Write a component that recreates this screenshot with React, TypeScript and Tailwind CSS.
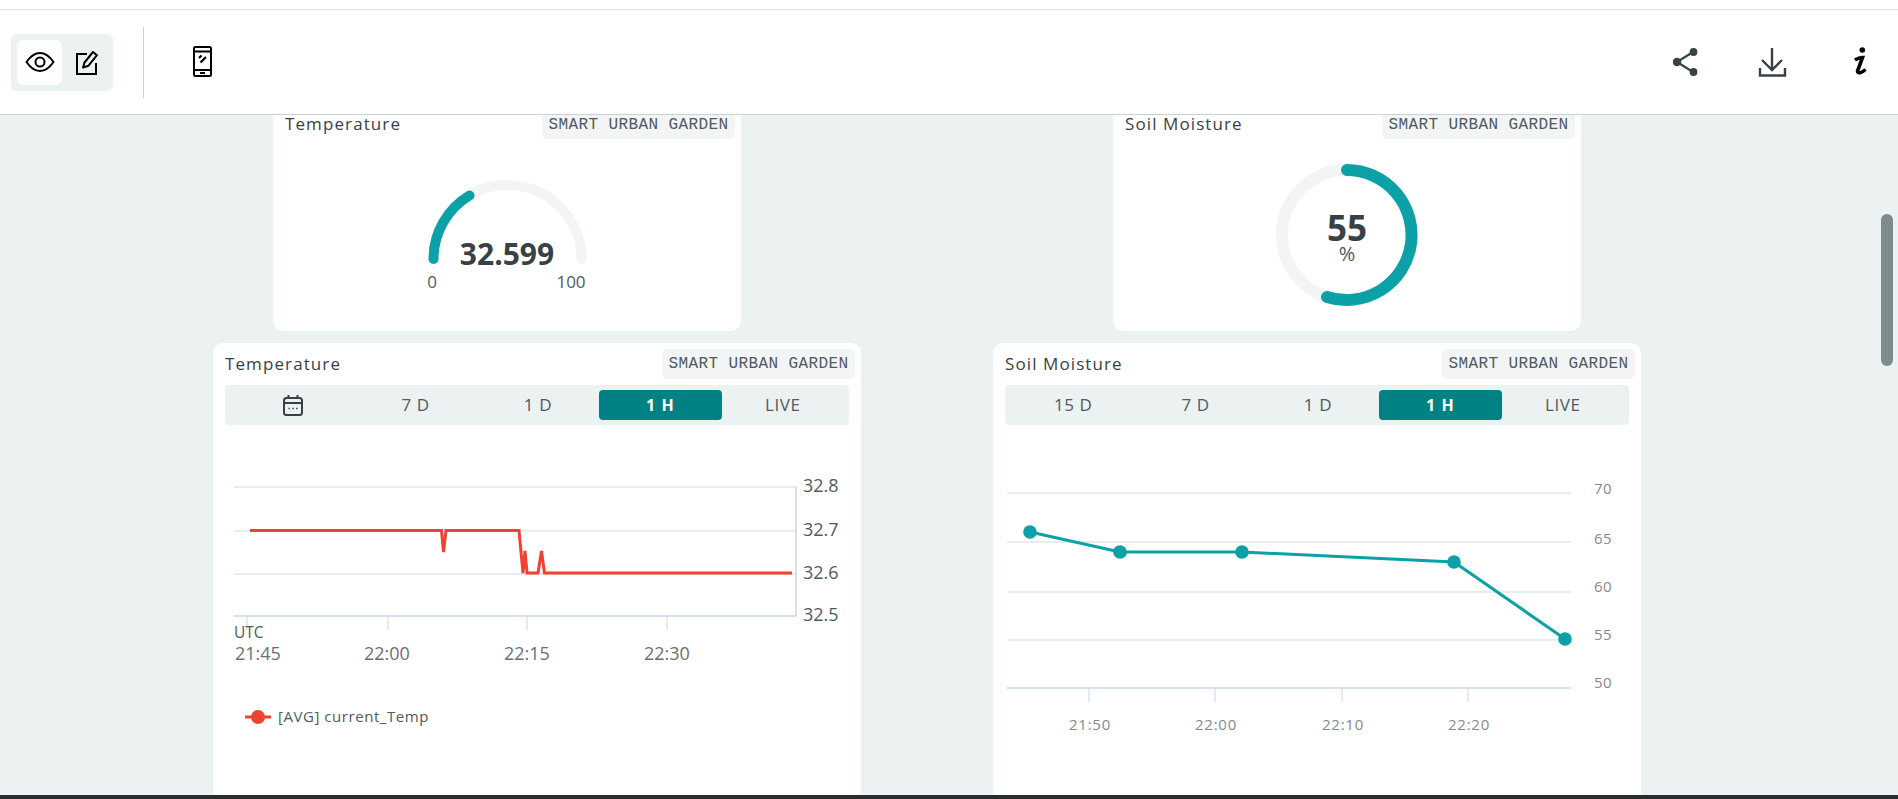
import React from 'react';

const TEAL = '#0ca1a6';

const Chip = ({ clipped }: { clipped?: boolean }) => (
  <span
    className={`flex w-[193px] items-center justify-center bg-[#f3f4f4] font-['Liberation_Mono',monospace] text-[16px] tracking-[0.4px] whitespace-pre text-[#4e5b61] ${
      clipped ? 'h-[24px] rounded-b-md pb-[5px]' : 'h-[30px] rounded-md'
    }`}
  >
    SMART URBAN GARDEN
  </span>
);

const CalendarIcon = () => (
  <svg width="20" height="21" viewBox="0 0 20 21" fill="none" stroke="#374146" strokeWidth="2">
    <rect x="1" y="3" width="18" height="17" rx="2.5" />
    <path d="M1 8h18M5.5 0v4M14.5 0v4" />
    <path d="M5.5 13.5h1.4M9.3 13.5h1.4M13.1 13.5h1.4" strokeWidth="1.6" />
  </svg>
);

const Tabs = ({ first }: { first: React.ReactNode }) => (
  <div className="mx-3 mt-[6px] grid h-[40px] grid-cols-5 items-center rounded bg-[#ecf1f1] pr-[5px] pl-[7px] text-[17px] tracking-[0.6px] text-[#4e5b61]">
    <div className="flex justify-center">{first}</div>
    <div className="text-center">7 D</div>
    <div className="text-center">1 D</div>
    <div className="flex h-[30px] items-center justify-center rounded bg-[#008184] text-[16px] font-bold tracking-[1px] text-white">1 H</div>
    <div className="text-center">LIVE</div>
  </div>
);

const ChartCard = ({ title, first, children }: { title: string; first: React.ReactNode; children: React.ReactNode }) => (
  <section className="flex-1 overflow-hidden rounded-t-[10px] bg-white">
    <div className="flex items-center justify-between pt-[6px] pr-[6px] pl-3">
      <h3 className="text-[17px] font-medium tracking-[1.1px] text-[#374146]">{title}</h3>
      <Chip />
    </div>
    <Tabs first={first} />
    {children}
  </section>
);

const TempChart = () => {
  const ticks = [247, 388, 527, 667];
  const times: [string, number][] = [['21:45', 235], ['22:00', 364], ['22:15', 504], ['22:30', 644]];
  const ys: [string, number][] = [['32.8', 487], ['32.7', 531], ['32.6', 574], ['32.5', 616]];
  return (
    <svg className="block" width="648" height="370" viewBox="213 425 648 370">
      {ys.slice(0, 3).map(([, y]) => (
        <line key={y} x1="234" x2="796" y1={y} y2={y} stroke="#dfe7ea" strokeWidth="1.5" />
      ))}
      <path d="M234 616H796V487" fill="none" stroke="#c9d6ea" strokeWidth="1.5" />
      {ticks.map((x) => (
        <line key={x} x1={x} x2={x} y1="616" y2="630" stroke="#c9d6ea" strokeWidth="1" />
      ))}
      <path
        d="M250 530.5H441.5L443.5 552L446 530.5H519L523 573L525 551L527 573H538L541.5 551L544.5 573H792"
        fill="none"
        stroke="#ee4330"
        strokeWidth="3"
      />
      {ys.map(([v, y]) => (
        <text key={v} x="803" y={y + 5} fontSize="18" fill="#4e5b61">
          {v}
        </text>
      ))}
      <text x="234" y="638" fontSize="15.5" fill="#4e5b61">UTC</text>
      {times.map(([t, x]) => (
        <text key={t} x={x} y="660" fontSize="18" fill="#6d6f71">
          {t}
        </text>
      ))}
      <line x1="245" x2="271" y1="717" y2="717" stroke="#ee4330" strokeWidth="3" />
      <circle cx="258" cy="717" r="7" fill="#ee4330" />
      <text x="278" y="722" fontSize="15" fill="#4e5b61" letterSpacing="0.55">[AVG] current_Temp</text>
    </svg>
  );
};

const SoilChart = () => {
  const grid: [number, number][] = [[493, 494], [542, 544], [592, 592], [640, 640]];
  const labels = ['70', '65', '60', '55'];
  const ticks: [string, number][] = [['21:50', 1089], ['22:00', 1215], ['22:10', 1342], ['22:20', 1468]];
  const pts = [[1030, 532], [1120, 552], [1242, 552], [1454, 562], [1565, 639]];
  return (
    <svg className="block" width="648" height="370" viewBox="993 425 648 370">
      {grid.map(([y, base], i) => (
        <g key={y}>
          <line x1="1007" x2="1571" y1={y} y2={y} stroke="#dfe7ea" strokeWidth="1.5" />
          <text x="1594" y={base} fontSize="15" fill="#7f8c8d" letterSpacing="0.4">{labels[i]}</text>
        </g>
      ))}
      <line x1="1007" x2="1571" y1="688" y2="688" stroke="#c9d6ea" strokeWidth="1.5" />
      <text x="1594" y="688" fontSize="15" fill="#7f8c8d" letterSpacing="0.4">50</text>
      {ticks.map(([t, x]) => (
        <g key={t}>
          <line x1={x} x2={x} y1="688" y2="702" stroke="#c9d6ea" strokeWidth="1" />
          <text x={x + 1} y="730" fontSize="15" fill="#7f8c8d" textAnchor="middle" letterSpacing="0.8">{t}</text>
        </g>
      ))}
      <polyline points={pts.map((p) => p.join(',')).join(' ')} fill="none" stroke={TEAL} strokeWidth="3" />
      {pts.map(([x, y]) => (
        <circle key={x} cx={x} cy={y} r="6.8" fill={TEAL} />
      ))}
    </svg>
  );
};

const Gauge = () => (
  <svg className="block" width="468" height="192" viewBox="273 139 468 192">
    <path d="M433.500 259A74 74 0 0 1 581.500 259" fill="none" stroke="#f3f4f4" strokeWidth="10" strokeLinecap="round" />
    <path d="M433.500 259A74 74 0 0 1 469.500 195.500" fill="none" stroke={TEAL} strokeWidth="10" strokeLinecap="round" />
    <text x="507" y="265" fontSize="30" fontWeight="700" fill="#374146" textAnchor="middle">32.599</text>
    <text x="432" y="288" fontSize="17" fill="#4e5b61" textAnchor="middle">0</text>
    <text x="571" y="288" fontSize="17" fill="#4e5b61" textAnchor="middle">100</text>
  </svg>
);

const Donut = () => (
  <svg className="block" width="468" height="192" viewBox="1113 139 468 192">
    <circle cx="1347" cy="235" r="65" fill="none" stroke="#f3f4f4" strokeWidth="12" />
    <path d="M1347 170A65 65 0 1 1 1327 297" fill="none" stroke={TEAL} strokeWidth="12" strokeLinecap="round" />
    <text x="1347" y="241" fontSize="35" fontWeight="700" fill="#374146" textAnchor="middle">55</text>
    <text x="1347" y="261" fontSize="20" fill="#4e5b61" textAnchor="middle">%</text>
  </svg>
);

const Widget = ({ title, offset, children }: { title: string; offset: string; children: React.ReactNode }) => (
  <section className={`h-[216px] w-[468px] shrink-0 rounded-b-[10px] bg-white ${offset}`}>
    <div className="flex items-start justify-between pr-[6px] pl-3">
      <h3 className="text-[17px] leading-[18px] font-medium tracking-[1.1px] text-[#374146]">{title}</h3>
      <Chip clipped />
    </div>
    {children}
  </section>
);

export default function App() {
  return (
    <div className="relative flex h-[799px] w-[1898px] flex-col overflow-hidden bg-[#ecf1f1] font-['Open_Sans',sans-serif]">
      <div className="h-[10px] shrink-0 border-b border-[#dfe5e5] bg-white" />
      <header className="flex h-[105px] shrink-0 items-center border-b border-[#c9d2d2] bg-white">
        <div className="ml-[11px] flex h-[57px] w-[102px] items-center rounded-md bg-[#ecf1f1] pl-[6px]">
          <button className="flex h-[45px] w-[45px] items-center justify-center rounded-md bg-white">
            <svg width="30" height="20" viewBox="0 0 30 20" fill="none" stroke="#000" strokeWidth="2">
              <path d="M1.5 10C6 3.5 10.500 1 15 1s9 2.500 13.500 9C24 16.500 19.500 19 15 19S6 16.500 1.500 10z" />
              <circle cx="15" cy="10" r="4.500" />
            </svg>
          </button>
          <button className="flex h-[45px] w-[50px] items-center justify-center">
            <svg width="24" height="25" viewBox="0 0 24 25" fill="none" stroke="#000" strokeWidth="2">
              <path d="M12 4H2v20h19V13" />
              <path d="M8 17.500l1.500-5L18 2l4 3.200-8.500 10.500z" strokeLinejoin="round" />
            </svg>
          </button>
        </div>
        <div className="ml-[30px] h-[71px] w-px bg-[#c9d2d2]" />
        <div className="mb-[2px] ml-[49px]">
          <svg className="block" width="19" height="31" viewBox="0 0 19 31" fill="none" stroke="#000" strokeWidth="2">
            <rect x="1" y="1" width="17" height="29" rx="1.500" />
            <path d="M1 5.500h17M1 24h17M7 27h5" />
            <path d="M6 12l2.500-2.500M7.500 16.500l5.500-5.500" strokeWidth="2.200" />
          </svg>
        </div>
        <div className="ml-auto">
          <svg className="block" width="225" height="40" viewBox="1673 42 225 40" fill="none">
            <g stroke="#374146" strokeWidth="2.200">
              <path d="M1693 52L1677 62l16 10" />
            </g>
            <g fill="#374146">
              <circle cx="1693.500" cy="52" r="3.900" />
              <circle cx="1677" cy="62" r="4.300" />
              <circle cx="1693.500" cy="72" r="3.900" />
            </g>
            <path d="M1772 48v22M1762 60l10 10 10-10M1760 68v7.500h25V68" stroke="#374146" strokeWidth="2.400" />
            <circle cx="1862.300" cy="50" r="2.800" fill="#000" />
            <path d="M1855 60c3-2 5-2.500 7.500-2.500L1857.500 71c0 3 4 2 8-1.500" stroke="#000" strokeWidth="3.600" />
          </svg>
        </div>
      </header>

      <main className="flex min-h-0 flex-1 gap-[132px] pl-[213px]">
        <div className="flex w-[648px] flex-col gap-3">
          <Widget title="Temperature" offset="ml-[60px]">
            <Gauge />
          </Widget>
          <ChartCard title="Temperature" first={<CalendarIcon />}>
            <TempChart />
          </ChartCard>
        </div>
        <div className="flex w-[648px] flex-col gap-3">
          <Widget title="Soil Moisture" offset="ml-[120px]">
            <Donut />
          </Widget>
          <ChartCard title="Soil Moisture" first="15 D">
            <SoilChart />
          </ChartCard>
        </div>
      </main>

      <div className="h-[4px] shrink-0 bg-[#2a2d30]" />
      <div className="absolute top-[214px] left-[1881px] h-[152px] w-[12px] rounded-full bg-[#7f8c8d]" />
    </div>
  );
}
